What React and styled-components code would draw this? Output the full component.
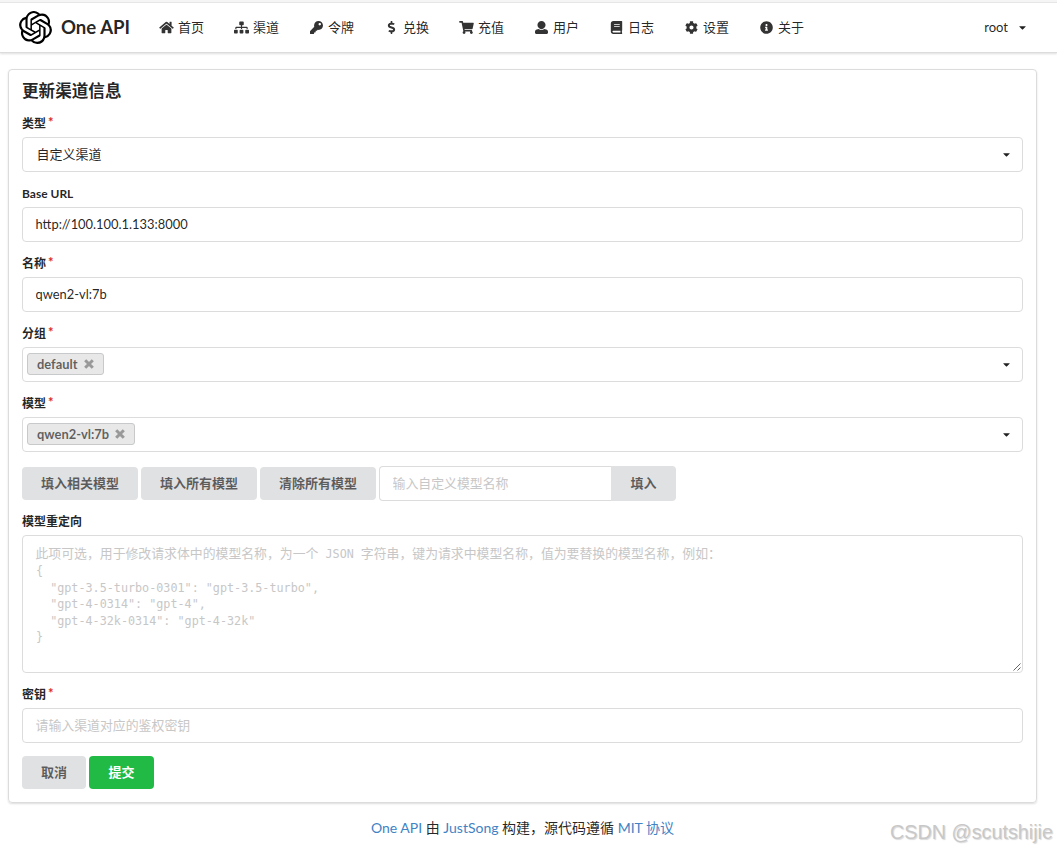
import React from 'react';
import styled, { createGlobalStyle } from 'styled-components';
import {
    FaHome,
    FaSitemap,
    FaKey,
    FaDollarSign,
    FaShoppingCart,
    FaBook,
    FaCog,
    FaInfoCircle,
    FaCaretDown,
} from 'react-icons/fa';
import { SiOpenai } from 'react-icons/si';

const GlobalStyle = createGlobalStyle`
* {
    box-sizing: border-box;
}
body {
    margin: 0;
    background: #fff;
    color: rgba(0, 0, 0, 0.87);
    font-family: Lato, 'Noto Sans CJK SC', sans-serif;
    font-size: 12.9px;
    line-height: 18px;
}
input, button {
    font-family: inherit;
    font-size: inherit;
}
`;

const Page = styled.div`
position: relative;
height: 850px;
overflow: hidden;
border-top: 2px solid #f5f5f5;
`;

const Menu = styled.nav`
display: flex;
align-items: center;
height: 51px;
padding: 0 29px 0 18.5px;
border-top: 1px solid #e6e6e7;
border-bottom: 1px solid #dcdcdd;
box-shadow: 0 1px 2px 0 rgba(34, 36, 38, 0.15);
`;

const Logo = styled(SiOpenai)`
flex: none;
width: 33px;
height: 33px;
color: #000;
`;

const Brand = styled.div`
width: 98.5px;
padding: 0 0 2px 9.5px;
font-size: 18.6px;
font-weight: 700;
line-height: 24px;
white-space: nowrap;
`;

const MenuItem = styled.a`
display: flex;
align-items: center;
width: 75px;
padding-left: 9px;
white-space: nowrap;

svg {
    flex: none;
    width: 15px;
    height: 13px;
    margin-right: 4px;
    color: #333;
}
`;

const MenuText = styled.span`
padding-bottom: 2px;
font-size: 13px;
`;

const UserMenu = styled.div`
display: flex;
align-items: center;
gap: 9px;
margin-left: auto;
`;

const Segment = styled.section`
display: flex;
flex-direction: column;
margin: 16px 20px 0 8px;
padding: 11px 13px 13px;
height: 734px;
border: 1px solid #dcdcdd;
border-radius: 4px;
box-shadow: 0 1px 2px 0 rgba(34, 36, 38, 0.15);
`;

const Title = styled.h3`
margin: 0 0 14px;
font-size: 16.6px;
font-weight: 700;
line-height: 20px;
`;

const Field = styled.div`
display: flex;
flex-direction: column;
margin-bottom: ${(props) => props.$gap || 13}px;
`;

const Label = styled.label`
display: flex;
height: 18px;
margin-bottom: 4px;
font-size: 12px;
font-weight: 700;
line-height: 18px;

&::after {
    content: ${(props) => (props.$required ? "'*'" : 'none')};
    margin: -2px 0 0 2px;
    color: #db2828;
    font-size: 13px;
}
`;

const Input = styled.input`
width: ${(props) => props.$width || '100%'};
height: 35px;
padding: 0 12.5px 2px;
border: 1px solid #dcdcdd;
border-radius: ${(props) => (props.$joined ? '4px 0 0 4px' : '4px')};
border-right-width: ${(props) => (props.$joined ? 0 : 1)}px;
outline: none;
color: rgba(0, 0, 0, 0.87);

&::placeholder {
    color: #c7c7c7;
    opacity: 1;
}
`;

const Select = styled.div`
display: flex;
align-items: center;
justify-content: space-between;
height: 35px;
padding: 0 10px 0 ${(props) => (props.$multiple ? 4 : 13.5)}px;
border: 1px solid #dcdcdd;
border-radius: 4px;
`;

const SelectText = styled.span`
padding-bottom: 2px;
font-size: 13px;
`;

const Tag = styled.span`
display: flex;
align-items: center;
gap: 6px;
height: 22px;
margin-bottom: 1px;
padding: 0 9px;
border: 1px solid #c8c9ca;
border-radius: 3px;
background: #e8e8e8;
color: rgba(0, 0, 0, 0.6);
font-weight: 700;
`;

const ButtonRow = styled.div`
display: flex;
align-items: center;
gap: 3px;
margin: ${(props) => props.$margin || 0};
`;

const Button = styled.button`
width: ${(props) => props.$width}px;
height: ${(props) => (props.$joined ? 35 : 33)}px;
padding: 0 0 2px;
border: none;
border-radius: ${(props) => (props.$joined ? '0 4px 4px 0' : '4px')};
background: ${(props) => (props.$positive ? '#21ba45' : '#e0e1e2')};
color: ${(props) => (props.$positive ? '#fff' : 'rgba(0, 0, 0, 0.6)')};
font-size: 13px;
font-weight: 700;
`;

const ActionInput = styled.div`
display: flex;
`;

const TextArea = styled.div`
position: relative;
height: 138px;
padding: 9px 13px;
border: 1px solid #dcdcdd;
border-radius: 4px;
color: #c7c7c7;
font-family: 'DejaVu Sans Mono', 'Noto Sans CJK SC', monospace;
font-size: 11.75px;
line-height: 16.6px;
white-space: pre;
`;

const Hint = styled.div`
margin-left: -0.5px;
font-size: 12.87px;
line-height: 18px;

span {
    font-size: 11.75px;
}
`;

const Grip = styled.svg`
position: absolute;
right: 1px;
bottom: 1px;
`;

const Footer = styled.footer`
margin-top: 15px;
font-size: 14px;
line-height: 20px;
text-align: center;
padding-right: 12px;

a {
    color: #4183c4;
}
`;

const Watermark = styled.div`
position: absolute;
right: 4px;
bottom: 6px;
color: #c8c8c8;
font-family: 'Liberation Sans', sans-serif;
font-size: 19.8px;
line-height: 24px;
text-shadow: 1px 1px 1px rgba(0, 0, 0, 0.15);
`;

const UserIcon = () => (
    <svg viewBox='0 0 512 512' fill='currentColor'>
        <path d='M256 0c88.366 0 160 71.634 160 160s-71.634 160-160 160S96 248.366 96 160 167.634 0 256 0zm183.283 333.821l-71.313-17.828c-74.923 53.89-165.738 41.864-223.94 0l-71.313 17.828C29.981 344.505 0 382.903 0 426.955V464c0 26.51 21.49 48 48 48h416c26.51 0 48-21.49 48-48v-37.045c0-44.052-29.981-82.45-72.717-93.134z' />
    </svg>
);

const DeleteIcon = () => (
    <svg width='10' height='10' viewBox='0 0 10 10' stroke='#999' strokeWidth='3'>
        <path d='M1.2 1.2l7.6 7.6M8.8 1.2L1.2 8.8' />
    </svg>
);

const menuItems = [
    { name: '首页', icon: FaHome },
    { name: '渠道', icon: FaSitemap },
    { name: '令牌', icon: FaKey },
    { name: '兑换', icon: FaDollarSign },
    { name: '充值', icon: FaShoppingCart },
    { name: '用户', icon: UserIcon },
    { name: '日志', icon: FaBook },
    { name: '设置', icon: FaCog },
    { name: '关于', icon: FaInfoCircle },
];

const mapping = `  "gpt-3.5-turbo-0301": "gpt-3.5-turbo",
  "gpt-4-0314": "gpt-4",
  "gpt-4-32k-0314": "gpt-4-32k"
`;

const EditChannel = () => (
    <Segment>
        <Title>更新渠道信息</Title>

        <Field>
            <Label $required>类型</Label>
            <Select>
                <SelectText>自定义渠道</SelectText>
                <FaCaretDown size={11} />
            </Select>
        </Field>

        <Field>
            <Label>Base URL</Label>
            <Input defaultValue='http://100.100.1.133:8000' />
        </Field>

        <Field>
            <Label $required>名称</Label>
            <Input defaultValue='qwen2-vl:7b' />
        </Field>

        <Field>
            <Label $required>分组</Label>
            <Select $multiple>
                <Tag>default <DeleteIcon /></Tag>
                <FaCaretDown size={11} />
            </Select>
        </Field>

        <Field $gap={14}>
            <Label $required>模型</Label>
            <Select $multiple>
                <Tag>qwen2-vl:7b <DeleteIcon /></Tag>
                <FaCaretDown size={11} />
            </Select>
        </Field>

        <ButtonRow $margin='0 0 12px'>
            <Button $width={116}>填入相关模型</Button>
            <Button $width={116}>填入所有模型</Button>
            <Button $width={116}>清除所有模型</Button>
            <ActionInput>
                <Input $joined $width='232px' placeholder='输入自定义模型名称' />
                <Button $joined $width={65}>填入</Button>
            </ActionInput>
        </ButtonRow>

        <Field>
            <Label>模型重定向</Label>
            <TextArea>
                <Hint>
                    此项可选，用于修改请求体中的模型名称，为一个<span> JSON </span>字符串，键为请求中模型名称，值为要替换的模型名称，例如：
                </Hint>
                <div>{'{'}</div>
                {mapping}
                <div>{'}'}</div>
                <Grip width='8' height='8' viewBox='0 0 8 8' stroke='#555' strokeWidth='0.9'>
                    <path d='M0.5 7.5l7-7M4.5 7.5l3-3' />
                </Grip>
            </TextArea>
        </Field>

        <Field>
            <Label $required>密钥</Label>
            <Input placeholder='请输入渠道对应的鉴权密钥' />
        </Field>

        <ButtonRow>
            <Button $width={64}>取消</Button>
            <Button $positive $width={65}>提交</Button>
        </ButtonRow>
    </Segment>
);

const App = () => {
    return (
        <Page>
            <GlobalStyle />
            <Menu>
                <Logo />
                <Brand>One API</Brand>
                {menuItems.map(({ name, icon: Icon }) => (
                    <MenuItem key={name}>
                        <Icon />
                        <MenuText>{name}</MenuText>
                    </MenuItem>
                ))}
                <UserMenu>
                    <MenuText>root</MenuText>
                    <FaCaretDown size={11} />
                </UserMenu>
            </Menu>

            <EditChannel />

            <Footer>
                <a>One API</a> 由 <a>JustSong</a> 构建，源代码遵循 <a>MIT 协议</a>
            </Footer>
            <Watermark>CSDN @scutshijie</Watermark>
        </Page>
    );
};

export default App;
